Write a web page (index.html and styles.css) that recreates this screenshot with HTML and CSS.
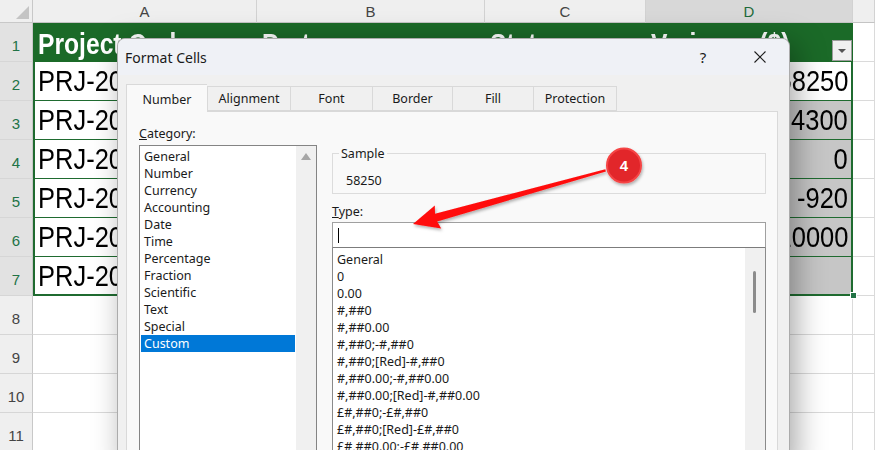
FILE: index.html
```html
<!DOCTYPE html>
<html lang="en">
<head>
    <meta charset="UTF-8">
    <title>Format Cells</title>
    <link rel="stylesheet" href="styles.css">
</head>
<body>
    <!-- Worksheet -->
    <div class="sheet">
        <div class="corner"></div>
        <div class="colhead">A</div>
        <div class="colhead">B</div>
        <div class="colhead">C</div>
        <div class="colhead colhead-on">D</div>
        <div class="colhead"></div>

        <div class="rowhead rowhead-on">1</div>
        <div class="cell th"><span class="fit">Project Code</span></div>
        <div class="cell th"><span class="fit">Partner</span></div>
        <div class="cell th"><span class="fit">Status</span></div>
        <div class="cell th th-last"><span class="fit">Variance ($)</span><span class="filter"></span></div>
        <div class="cell"></div>

        <div class="rowhead rowhead-on">2</div>
        <div class="cell td td-first"><span class="fit">PRJ-2024-101</span></div>
        <div class="cell td"></div>
        <div class="cell td"></div>
        <div class="cell td td-last"><span class="fit">58250</span></div>
        <div class="cell"></div>

        <div class="rowhead rowhead-on">3</div>
        <div class="cell td td-first"><span class="fit">PRJ-2024-102</span></div>
        <div class="cell td"></div>
        <div class="cell td"></div>
        <div class="cell td td-last td-sel"><span class="fit">4300</span></div>
        <div class="cell"></div>

        <div class="rowhead rowhead-on">4</div>
        <div class="cell td td-first"><span class="fit">PRJ-2024-103</span></div>
        <div class="cell td"></div>
        <div class="cell td"></div>
        <div class="cell td td-last td-sel"><span class="fit">0</span></div>
        <div class="cell"></div>

        <div class="rowhead rowhead-on">5</div>
        <div class="cell td td-first"><span class="fit">PRJ-2024-104</span></div>
        <div class="cell td"></div>
        <div class="cell td"></div>
        <div class="cell td td-last td-sel"><span class="fit">-920</span></div>
        <div class="cell"></div>

        <div class="rowhead rowhead-on">6</div>
        <div class="cell td td-first"><span class="fit">PRJ-2024-105</span></div>
        <div class="cell td"></div>
        <div class="cell td"></div>
        <div class="cell td td-last td-sel"><span class="fit">10000</span></div>
        <div class="cell"></div>

        <div class="rowhead rowhead-on">7</div>
        <div class="cell td td-first td-end"><span class="fit">PRJ-2024-106</span></div>
        <div class="cell td td-end"></div>
        <div class="cell td td-end"></div>
        <div class="cell td td-last td-sel td-end"></div>
        <div class="cell"></div>

        <div class="rowhead">8</div>
        <div class="cell"></div><div class="cell"></div><div class="cell"></div><div class="cell"></div><div class="cell"></div>
        <div class="rowhead">9</div>
        <div class="cell"></div><div class="cell"></div><div class="cell"></div><div class="cell"></div><div class="cell"></div>
        <div class="rowhead">10</div>
        <div class="cell"></div><div class="cell"></div><div class="cell"></div><div class="cell"></div><div class="cell"></div>
        <div class="rowhead">11</div>
        <div class="cell"></div><div class="cell"></div><div class="cell"></div><div class="cell"></div><div class="cell"></div>
    </div>
    <div class="fill-handle"></div>

    <!-- Format Cells dialog -->
    <div class="dialog">
        <div class="titlebar">
            <span class="title">Format Cells</span>
            <span class="tb-btn">?</span>
            <span class="tb-btn">
                <svg width="12" height="12" viewBox="0 0 12 12"><path d="M0.5 0.5 L11.5 11.5 M11.5 0.5 L0.5 11.5" stroke="#1f1f1f" stroke-width="1.1" fill="none"/></svg>
            </span>
        </div>
        <div class="dlg-body">
            <div class="tabs">
                <div class="tab tab-on" style="width:81px">Number</div>
                <div class="tab" style="width:83px">Alignment</div>
                <div class="tab" style="width:82px">Font</div>
                <div class="tab" style="width:80px">Border</div>
                <div class="tab" style="width:81px">Fill</div>
                <div class="tab tab-last" style="width:84px">Protection</div>
            </div>
            <div class="panel">
                <div class="cat-col">
                    <div class="label"><u>C</u>ategory:</div>
                    <div class="cat-list">
                        <ul class="items cat-items">
                            <li>General</li>
                            <li>Number</li>
                            <li>Currency</li>
                            <li>Accounting</li>
                            <li>Date</li>
                            <li>Time</li>
                            <li>Percentage</li>
                            <li>Fraction</li>
                            <li>Scientific</li>
                            <li>Text</li>
                            <li>Special</li>
                            <li class="sel">Custom</li>
                        </ul>
                        <div class="vscroll"><span class="up-arrow"></span></div>
                    </div>
                </div>
                <div class="type-col">
                    <fieldset class="sample">
                        <legend>Sample</legend>
                        <div class="sample-val">58250</div>
                    </fieldset>
                    <div class="label type-label"><u>T</u>ype:</div>
                    <div class="type-input"><span class="caret"></span></div>
                    <div class="type-list">
                        <ul class="items type-items">
                            <li>General</li>
                            <li>0</li>
                            <li>0.00</li>
                            <li>#,##0</li>
                            <li>#,##0.00</li>
                            <li>#,##0;-#,##0</li>
                            <li>#,##0;[Red]-#,##0</li>
                            <li>#,##0.00;-#,##0.00</li>
                            <li>#,##0.00;[Red]-#,##0.00</li>
                            <li>£#,##0;-£#,##0</li>
                            <li>£#,##0;[Red]-£#,##0</li>
                            <li>£#,##0.00;-£#,##0.00</li>
                        </ul>
                        <div class="thin-scroll"><span class="thumb"></span></div>
                    </div>
                </div>
            </div>
        </div>
    </div>

    <!-- Step annotation -->
    <svg class="annot" width="875" height="450" viewBox="0 0 875 450">
        <defs>
            <filter id="shade" x="-30%" y="-30%" width="160%" height="160%">
                <feDropShadow dx="1" dy="2" stdDeviation="1.6" flood-color="#000" flood-opacity="0.3"/>
            </filter>
        </defs>
        <polygon points="413,224 434.8,205.4 435,213.7 605.3,169.2 605.9,171.6 437.2,221.4 441.2,228.6" fill="#ff0d0d" filter="url(#shade)"/>
        <circle cx="624" cy="165.5" r="17" fill="#e2252c" stroke="#f54545" stroke-width="2" filter="url(#shade)"/>
        <text x="624" y="171" class="badge-num">4</text>
    </svg>
</body>
</html>
```

FILE: styles.css
```css
body {
    margin: 0;
    width: 875px;
    height: 450px;
    overflow: hidden;
    position: relative;
    background: #fff;
    font-family: "Liberation Sans", Arial, sans-serif;
}

/* worksheet grid */
.sheet {
    display: grid;
    grid-template-columns: 33px 224px 228px 161px 207px 1fr;
    grid-template-rows: 23px;
    grid-auto-rows: 39px;
}
.corner {
    background: #efefef;
    border-right: 1px solid #c8c8c8;
    border-bottom: 1px solid #c8c8c8;
    display: flex;
    justify-content: flex-end;
    align-items: flex-end;
    padding: 0 3px 3px 0;
}
.corner::after {
    content: "";
    width: 0;
    height: 0;
    border-left: 13px solid transparent;
    border-bottom: 13px solid #c4c4c4;
}
.colhead {
    background: #efefef;
    border-right: 1px solid #d2d2d2;
    border-bottom: 1px solid #c4c4c4;
    display: flex;
    align-items: center;
    justify-content: center;
    color: #444;
    font-size: 15px;
}
.colhead-on {
    background: #d8d8d8;
    color: #1e6b3b;
}
.rowhead {
    background: #efefef;
    border-right: 1px solid #c8c8c8;
    border-bottom: 1px solid #d6d6d6;
    display: flex;
    align-items: flex-end;
    justify-content: center;
    padding-bottom: 7px;
    box-sizing: border-box;
    color: #444;
    font-size: 15px;
}
.rowhead-on {
    background: #e2e2e2;
    color: #217346;
}
.cell {
    border-right: 1px solid #dadada;
    border-bottom: 1px solid #dadada;
    display: flex;
    align-items: center;
    min-width: 0;
    overflow: hidden;
    white-space: nowrap;
    box-sizing: border-box;
}
/* narrow cell font: Arial widths squeezed to the sheet's narrow face */
.fit {
    display: inline-block;
    transform: scaleX(0.85);
    transform-origin: left center;
}
.th {
    background: #1b6a28;
    color: #fff;
    font-weight: bold;
    font-size: 29px;
    border: 0;
    align-items: flex-start;
    padding: 5px 1px 0 5px;
}
.filter {
    margin-left: auto;
    align-self: flex-end;
    margin-bottom: 1px;
    width: 20px;
    height: 21px;
    flex: none;
    box-sizing: border-box;
    background: #f0f0f0;
    border: 1px solid #9c9c9c;
    display: flex;
    align-items: center;
    justify-content: center;
}
.filter::after {
    content: "";
    border-top: 4px solid #555;
    border-left: 4px solid transparent;
    border-right: 4px solid transparent;
}
.td {
    font-size: 30px;
    color: #000;
    border-right: 0;
    border-bottom: 1px solid #1f6b30;
    padding-left: 3px;
}
.td-first {
    border-left: 2px solid #1f6b30;
}
.td-last {
    border-right: 2px solid #1f6b30;
    justify-content: flex-end;
    padding-right: 3px;
}
.td-last .fit {
    transform-origin: right center;
}
.td-sel {
    background: #c6c6c6;
}
.td-end {
    border-bottom: 2px solid #1f6b30;
}
.fill-handle {
    position: absolute;
    left: 850px;
    top: 292px;
    width: 5px;
    height: 5px;
    background: #217346;
    border: 1px solid #fff;
}

/* dialog */
.dialog {
    position: absolute;
    left: 117px;
    top: 38px;
    width: 673px;
    height: 430px;
    box-sizing: border-box;
    background: #f0f0f0;
    border: 1px solid #ababab;
    border-bottom: 0;
    border-radius: 8px 8px 0 0;
    box-shadow: 6px 6px 30px rgba(0, 0, 0, 0.35);
    font-family: "Noto Sans", sans-serif;
    font-size: 12.5px;
    color: #1a1a1a;
    display: flex;
    flex-direction: column;
    overflow: hidden;
}
.titlebar {
    height: 36px;
    flex: none;
    background: #eff1f6;
    display: flex;
    align-items: center;
    padding: 0 6px 0 7px;
    gap: 11px;
}
.title {
    flex: 1;
    font-size: 14px;
}
.tb-btn {
    width: 46px;
    display: flex;
    justify-content: center;
    align-items: center;
    font-size: 15px;
}
.dlg-body {
    flex: 1;
    display: flex;
    flex-direction: column;
    padding: 9px 11px 0 8px;
    min-height: 0;
}
.tabs {
    display: flex;
    align-items: flex-end;
    height: 27px;
}
.tab {
    height: 25px;
    box-sizing: border-box;
    border: 1px solid #d9d9d9;
    border-right: 0;
    background: #f0f0f0;
    display: flex;
    justify-content: center;
    align-items: flex-end;
    padding-bottom: 3px;
    line-height: 17px;
}
.tab-last {
    border-right: 1px solid #d9d9d9;
}
.tab-on {
    height: 28px;
    margin-bottom: -1px;
    background: #f9f9f9;
    border-bottom: 0;
    padding-bottom: 4px;
    position: relative;
    z-index: 1;
}
.panel {
    flex: 1;
    border: 1px solid #d9d9d9;
    background: #f9f9f9;
    display: flex;
    gap: 15px;
    padding: 13px 11px 0 12px;
}
.label {
    line-height: 17px;
}
.cat-col {
    width: 178px;
    display: flex;
    flex-direction: column;
}
.cat-list {
    flex: 1;
    margin-top: 3px;
    border: 1px solid #848484;
    background: #fff;
    display: flex;
}
.items {
    list-style: none;
    margin: 0;
    flex: 1;
    line-height: 17px;
    white-space: nowrap;
    overflow: hidden;
}
.cat-items {
    padding: 2px 1px 0 1px;
}
.cat-items li {
    padding-left: 3px;
}
.cat-items .sel {
    background: #0078d7;
    color: #fff;
}
.vscroll {
    width: 20px;
    background: #f0f0f0;
    display: flex;
    justify-content: center;
    align-items: flex-start;
    padding-top: 7px;
    box-sizing: border-box;
}
.up-arrow {
    width: 0;
    height: 0;
    border-left: 5px solid transparent;
    border-right: 5px solid transparent;
    border-bottom: 7px solid #a6a6a6;
}
.type-col {
    width: 434px;
    display: flex;
    flex-direction: column;
}
.sample {
    margin: 20px 0 0;
    padding: 0 0 4px 6px;
    border: 1px solid #dcdcdc;
    min-width: 0;
}
.sample legend {
    padding: 0 2px;
    line-height: 17px;
}
.sample-val {
    line-height: 17px;
    margin: 10px 0 0 7px;
}
.type-label {
    margin-top: 9px;
}
.type-input {
    margin-top: 2px;
    height: 26px;
    box-sizing: border-box;
    background: #fff;
    border: 1px solid #a0a0a0;
    border-bottom-color: #7c7c7c;
    display: flex;
    align-items: center;
    padding-left: 5px;
}
.caret {
    width: 1px;
    height: 15px;
    background: #000;
}
.type-list {
    flex: 1;
    border: 1px solid #8a8a8a;
    border-top: 0;
    background: #fff;
    display: flex;
}
.type-items {
    padding: 3px 0 0 4px;
}
.thin-scroll {
    width: 20px;
    background: #f0f0f0;
    padding: 23px 0 0 8px;
    box-sizing: border-box;
}
.thumb {
    display: block;
    width: 3px;
    height: 42px;
    border-radius: 2px;
    background: #8b8b8b;
}

/* annotation overlay */
.annot {
    position: absolute;
    left: 0;
    top: 0;
    pointer-events: none;
}
.badge-num {
    font-family: "Liberation Sans", Arial, sans-serif;
    font-weight: bold;
    font-size: 15px;
    fill: #fff;
    text-anchor: middle;
}
```
